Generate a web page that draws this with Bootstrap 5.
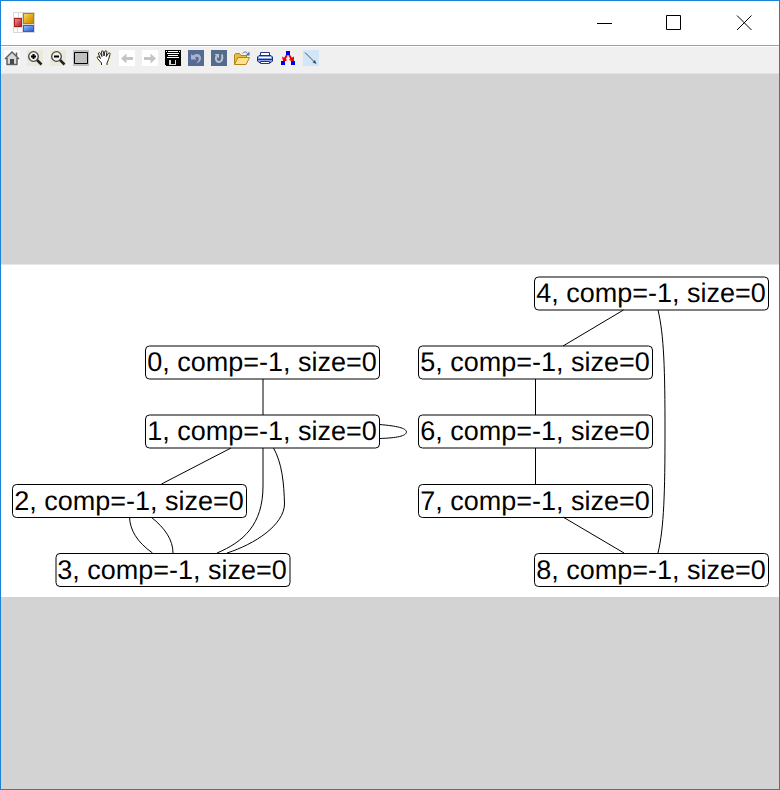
<!DOCTYPE html>
<html lang="en">
<head>
<meta charset="utf-8">
<meta name="viewport" content="width=device-width, initial-scale=1">
<title>Graph viewer</title>
<link href="https://cdn.jsdelivr.net/npm/bootstrap@5.3.0/dist/css/bootstrap.min.css" rel="stylesheet">
<style>
  body { font-family: "Liberation Sans", Arial, sans-serif; }
  .app-window { border: 1px solid #1883d7; }
  .title-bar { height: 44px; padding-left: 12px; }
  .caption-btn { width: 70px; border-radius: 0; }
  .tool-bar { background: #f0f0f0; border-top: 1px solid #a0a0a0; box-shadow: inset 0 1px #fff; padding: 4px 0 7px; }
  .tool-btn { padding: 0 4px 0 3px; line-height: 1; border: 0; border-radius: 0; }
  .stage { background: #d3d3d3; box-shadow: inset 0 1px #e3e3e3; }
  .graph { background: #fff; box-shadow: 0 -1px #e8e8e8; }
  .graph text { font-size: 27px; text-anchor: middle; text-rendering: geometricPrecision; }
  .edges, .boxes { fill: none; stroke: #000; stroke-width: 1; }
  svg { display: block; }
</style>
</head>
<body>
<div class="app-window d-flex flex-column min-vh-100 bg-white">
  <header class="title-bar d-flex align-items-stretch">
    <svg class="align-self-center" width="22" height="22" viewBox="0 0 22 22" aria-hidden="true">
      <defs>
        <linearGradient id="gold" x2="1" y2="1"><stop stop-color="#f8dc68"/><stop offset=".5" stop-color="#e4ac14"/><stop offset="1" stop-color="#c48800"/></linearGradient>
        <linearGradient id="red" x2="1" y2="1"><stop stop-color="#f09088"/><stop offset="1" stop-color="#b81c1c"/></linearGradient>
        <linearGradient id="blue" x2="1" y2="1"><stop stop-color="#98bcf8"/><stop offset="1" stop-color="#2858d0"/></linearGradient>
      </defs>
      <path fill="#d8d8d8" d="M0 0h22v21H0z"/>
      <path fill="#fff" d="M1 1h4v4H1zM6 1h3v4H6zM1 16h3v4H1zM5 16h4v4H5z"/>
      <path fill="#a82020" d="M1 6h8v9H1z"/><path fill="url(#red)" d="M2 7h6v7H2z"/>
      <path fill="#b08010" d="M10 1h11v11H10z"/><path fill="url(#gold)" d="M11 2h9v9h-9z"/>
      <path fill="#3860b8" d="M10 13h11v7H10z"/><path fill="url(#blue)" d="M11 14h9v5h-9z"/>
    </svg>
    <div class="ms-auto d-flex">
      <button type="button" class="caption-btn btn p-0 d-flex align-items-center justify-content-center" aria-label="Minimize">
        <svg width="16" height="16" viewBox="0 0 16 16"><path stroke="#000" d="M1 8.500h15"/></svg>
      </button>
      <button type="button" class="caption-btn btn p-0 d-flex align-items-center justify-content-center" aria-label="Maximize">
        <svg width="16" height="16" viewBox="0 0 16 16"><path fill="none" stroke="#000" d="M.5.5h14v14H.5z"/></svg>
      </button>
      <button type="button" class="caption-btn btn p-0 d-flex align-items-center justify-content-center" aria-label="Close">
        <svg width="16" height="16" viewBox="0 0 16 16"><path fill="none" stroke="#000" d="M1 .5l14.500 14.500M15.500.5L1 15"/></svg>
      </button>
    </div>
  </header>

  <div class="tool-bar d-flex flex-wrap" role="toolbar" aria-label="Graph tools">
    <button type="button" class="tool-btn btn" aria-label="Home">
      <svg width="16" height="16" viewBox="0 0 16 16"><path fill="#fafafa" d="M0 0h16v16H0z"/><path fill="#d8d8d8" d="M3 8l5-5 5 5v6H3z"/><path fill="none" stroke="#606060" stroke-width="1.500" d="M1 9l7-7 7 7M3 8v6.500h10V8M12.500 6V2.500"/><path fill="#484848" d="M6 9h4v5H6z"/></svg>
    </button>
    <button type="button" class="tool-btn btn" aria-label="Zoom in">
      <svg width="16" height="16" viewBox="0 0 16 16"><path fill="#ece9d8" d="M0 0h16v16H0z"/><path stroke="#222" stroke-width="2.500" d="M9.500 9.500l5 5"/><circle cx="6.500" cy="6.500" r="4.800" fill="#f0f0ec" stroke="#444" stroke-width="1.300"/><path stroke="#000" stroke-width="2" d="M4 6.500h5M6.500 4v5"/></svg>
    </button>
    <button type="button" class="tool-btn btn" aria-label="Zoom out">
      <svg width="16" height="16" viewBox="0 0 16 16"><path fill="#ece9d8" d="M0 0h16v16H0z"/><path stroke="#222" stroke-width="2.500" d="M9.500 9.500l5 5"/><circle cx="6.500" cy="6.500" r="4.800" fill="#f0f0ec" stroke="#444" stroke-width="1.300"/><path stroke="#000" stroke-width="2" d="M4 6.500h5"/></svg>
    </button>
    <button type="button" class="tool-btn btn" aria-label="Window zoom">
      <svg width="16" height="16" viewBox="0 0 16 16"><path fill="#c0c0c0" d="M0 0h16v16H0z"/><path fill="none" stroke="#000" d="M1.500 2.500h13v11h-13z"/></svg>
    </button>
    <button type="button" class="tool-btn btn" aria-label="Pan">
      <svg width="16" height="16" viewBox="0 0 16 16"><path fill="#f3f1e2" d="M0 0h16v16H0z"/><path fill="#fff" stroke="#222" stroke-linejoin="round" d="M5.500 15v-2L1.500 8.500C.5 7 2 6 3 7l1.500 1.500L2.500 4C2 2.500 3.700 2 4.300 3.300L6 6.500 5.500 2C5.500.5 7.300.5 7.500 2L8 6l.8-4C9-.2 11 .5 10.800 2.300L10.300 6.500l1.900-3c1-1.300 2.300-.5 1.800 1l-1.500 5-1.500 3.500v2"/></svg>
    </button>
    <button type="button" class="tool-btn btn" aria-label="Back">
      <svg width="16" height="16" viewBox="0 0 16 16"><path fill="#fff" d="M0 0h16v16H0z"/><path fill="#c4c4c4" d="M2 8.500L7.500 3.500v3.500H14v3H7.500v3.500z"/></svg>
    </button>
    <button type="button" class="tool-btn btn" aria-label="Forward">
      <svg width="16" height="16" viewBox="0 0 16 16"><path fill="#fff" d="M0 0h16v16H0z"/><path fill="#c4c4c4" d="M14 8.500L8.500 3.500v3.500H2v3h6.500v3.500z"/></svg>
    </button>
    <button type="button" class="tool-btn btn" aria-label="Save">
      <svg width="16" height="16" viewBox="0 0 16 16" shape-rendering="crispEdges"><path fill="#000" d="M0 0h16v16H1l-1-1z"/><path fill="#fff" d="M3 1h10v1H3zM2 3h12v1H2zM3 5h10v1H3zM2 7h12v1H2zM1 1h1v1H1zM14 1h1v1h-1z"/><path fill="#d8d8d8" d="M4 10h2v4h4v-4h1v5H4z"/></svg>
    </button>
    <button type="button" class="tool-btn btn" aria-label="Undo">
      <svg width="16" height="16" viewBox="0 0 16 16"><path fill="#566b93" d="M0 0h16v16H0z"/><path fill="#a9b5ce" d="M3 4l2 1.500C8.500 2.500 13 4 13 8c0 3-2 4.500-5 5.500 2-2 3-3 2.800-5C10.500 6.500 8.500 6 7 7.500L8.500 9.500H3z"/></svg>
    </button>
    <button type="button" class="tool-btn btn" aria-label="Redo">
      <svg width="16" height="16" viewBox="0 0 16 16"><path fill="#566b8c" d="M0 0h16v16H0z"/><path fill="none" stroke="#b8c6d4" stroke-width="2" d="M5.500 6C4 9.500 5.500 12 8 12s4-2.500 3-7.500"/><path fill="#b8c6d4" d="M3.500 4H8v4.500z"/></svg>
    </button>
    <button type="button" class="tool-btn btn" aria-label="Open">
      <svg width="16" height="16" viewBox="0 0 16 16"><path fill="#e8bd45" stroke="#b58416" d="M.5 14V4.500l1-1h4l1.500 2h5.500V8"/><path fill="#ffe28a" stroke="#b58416" d="M.5 14.500L4 7.500h11.500l-3.500 7z"/><path fill="none" stroke="#48709c" d="M8.500 3.500c1.500-2 4-2 5 0"/><path fill="#48709c" d="M15.500 1.500v4h-4z"/></svg>
    </button>
    <button type="button" class="tool-btn btn" aria-label="Print">
      <svg width="16" height="16" viewBox="0 0 16 16"><path fill="#fff" stroke="#26377e" d="M3.500 6V2.500h9V6"/><path fill="#8ca4e4" stroke="#1c2e84" d="M2 5.500h12l1.500 1.500v4L14 12.500H2L.5 11V7z"/><path stroke="#fff" d="M2 7.500h12"/><path stroke="#1c2e84" d="M1 9.500h14"/><path fill="#fff" stroke="#26377e" d="M3.500 11.500h9v2h-9z"/></svg>
    </button>
    <button type="button" class="tool-btn btn" aria-label="Layout">
      <svg width="16" height="16" viewBox="0 0 16 16"><path fill="none" stroke="#f00000" stroke-width="2" d="M7 5L4 10M9 5l4 6"/><path fill="#f00000" d="M2 6.500L6.500 9v2H3zM9.500 10.500V9L14 6.500V11z"/><path fill="#0000e8" d="M6 1h4v4H6zM1 11h4v4H1zM11 11h4v4h-4z"/></svg>
    </button>
    <button type="button" class="tool-btn btn" aria-label="Insert edge">
      <svg width="16" height="16" viewBox="0 0 16 16"><path fill="#d2e6f8" d="M0 0h16v16H0z"/><path stroke="#44546a" d="M2 2.500l10 10"/><path fill="#44546a" d="M13.500 14l-4-1.500 2.500-2.500z"/></svg>
    </button>
  </div>

  <main class="stage flex-grow-1 d-flex align-items-center">
    <svg class="graph w-100" viewBox="0 0 778 332" role="img" aria-label="Graph with nodes 0 to 8">
      <g class="edges">
        <path d="M262 114V150"/>
        <path d="M230 183L160.500 219"/>
        <path d="M262 183V221C262 260 242 277 216 288"/>
        <path d="M272.500 183C281 198 283 218 283.500 239C283 260 254 279 226 288"/>
        <path d="M378.500 159.500C396 161 405 163 405.500 167C405 171 396 173 378.500 173.500"/>
        <path d="M128.500 252C129 265 136 277 151.500 288"/>
        <path d="M150 252C164 263 172 275 172 288"/>
        <path d="M622.500 45L562 81"/>
        <path d="M657 45C663 70 664 105 664 166C664 227 663 263 657 288"/>
        <path d="M534.500 114V150"/>
        <path d="M534.500 183V219"/>
        <path d="M562 252L623 288"/>
      </g>
      <g class="boxes">
        <rect x="144.500" y="81" width="234" height="33" rx="4"/>
        <rect x="144.500" y="150" width="234" height="33" rx="4"/>
        <rect x="11.500" y="219.500" width="234" height="33" rx="4"/>
        <rect x="55" y="288.500" width="234" height="33" rx="4"/>
        <rect x="533.500" y="12" width="234" height="33" rx="4"/>
        <rect x="417.500" y="81" width="234" height="33" rx="4"/>
        <rect x="417.500" y="150" width="234" height="33" rx="4"/>
        <rect x="417.500" y="219.500" width="234" height="33" rx="4"/>
        <rect x="533.500" y="288.500" width="234" height="33" rx="4"/>
      </g>
      <text x="261" y="106">0, comp=-1, size=0</text>
      <text x="261" y="175">1, comp=-1, size=0</text>
      <text x="128" y="245">2, comp=-1, size=0</text>
      <text x="171" y="314">3, comp=-1, size=0</text>
      <text x="650" y="37">4, comp=-1, size=0</text>
      <text x="534" y="106">5, comp=-1, size=0</text>
      <text x="534" y="175">6, comp=-1, size=0</text>
      <text x="534" y="245">7, comp=-1, size=0</text>
      <text x="650" y="314">8, comp=-1, size=0</text>
    </svg>
  </main>
</div>
<script src="https://cdn.jsdelivr.net/npm/bootstrap@5.3.0/dist/js/bootstrap.bundle.min.js"></script>
</body>
</html>
